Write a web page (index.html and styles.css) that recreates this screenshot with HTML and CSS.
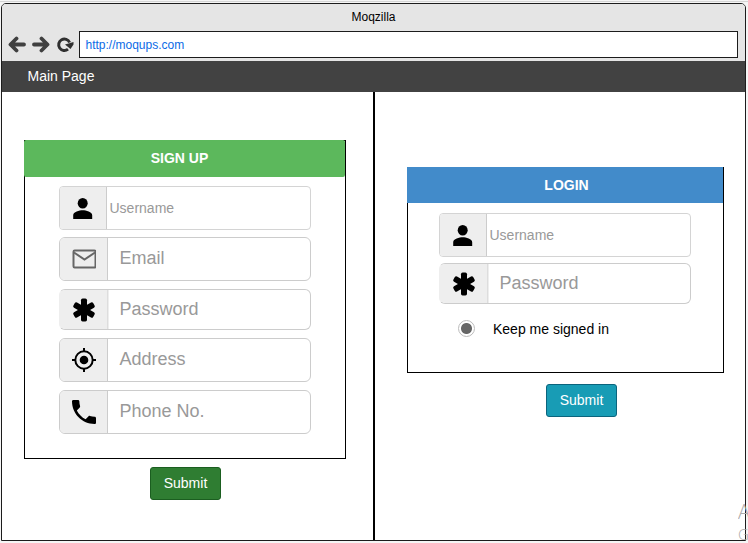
FILE: index.html
```html
<!DOCTYPE html>
<html lang="en">
<head>
<meta charset="utf-8">
<title>Moqzilla</title>
<link rel="stylesheet" href="styles.css">
</head>
<body>
<svg class="defs" width="0" height="0">
  <symbol id="user" viewBox="0 0 24 24"><ellipse cx="11.700" cy="7.300" rx="5" ry="5.300"/><path d="M11.700 14.300c-3.300 0-9.500 1.500-9.500 5v3.700h19v-3.700c0-3.500-6.200-5-9.500-5z"/></symbol>
  <symbol id="asterisk" viewBox="0 0 24 24"><rect x="9" y=".6" width="6" height="22.800" rx="1.600"/><rect x="9" y=".6" width="6" height="22.800" rx="1.600" transform="rotate(60 12 12)"/><rect x="9" y=".6" width="6" height="22.800" rx="1.600" transform="rotate(120 12 12)"/></symbol>
</svg>
<div class="window">
  <header class="chrome">
    <div class="title">Moqzilla</div>
    <div class="toolbar">
      <svg class="tool" viewBox="0 0 18 18"><path d="M16 8.500H3M8.500 2.500l-6 6 6 6"/></svg>
      <svg class="tool" viewBox="0 0 18 18"><path d="M2 8.500h13M9.500 2.500l6 6-6 6"/></svg>
      <svg class="tool reload" viewBox="0 0 18 18"><path d="M12 13.200A5.700 5.700 0 1 1 13.600 6.500"/><path class="tip" d="M9 8.500L17.500 6v2.500l-3 4.500z"/></svg>
      <div class="url">http://moqups.com</div>
    </div>
  </header>
  <nav class="nav">Main Page</nav>
  <main class="content">
    <section class="side signup">
      <div class="panel">
        <h2>SIGN UP</h2>
        <div class="fields">
          <div class="field small"><span class="addon"><svg viewBox="0 0 24 24"><use href="#user"/></svg></span><span class="hint">Username</span></div>
          <div class="field"><span class="addon"><svg class="mail" viewBox="0 0 24 24"><rect x="1.500" y="3.500" width="22" height="17" rx="1.200"/><path d="M2 5.500l10.500 7 10.500-7"/></svg></span><span class="hint">Email</span></div>
          <div class="field pass"><span class="addon"><svg viewBox="0 0 24 24"><use href="#asterisk"/></svg></span><span class="hint">Password</span></div>
          <div class="field"><span class="addon"><svg viewBox="0 0 24 24"><circle cx="12" cy="12" r="4.300"/><circle cx="12" cy="12" r="8.700" fill="none" stroke="#000" stroke-width="2"/><path d="M12 0v4M12 20v4M0 12h4M20 12h4" stroke="#000" stroke-width="2"/></svg></span><span class="hint">Address</span></div>
          <div class="field"><span class="addon"><svg viewBox="3 3 18 18"><path d="M6.620 10.790c1.440 2.830 3.760 5.140 6.590 6.590l2.200-2.200c.270-.270.670-.360 1.020-.240 1.120.370 2.330.570 3.570.570.550 0 1 .450 1 1V20c0 .550-.450 1-1 1-9.390 0-17-7.610-17-17 0-.550.450-1 1-1h3.500c.550 0 1 .450 1 1 0 1.250.200 2.450.570 3.570.110.350.030.740-.250 1.020l-2.200 2.200z"/></svg></span><span class="hint">Phone No.</span></div>
        </div>
      </div>
      <button class="submit green">Submit</button>
    </section>
    <section class="side login">
      <div class="panel">
        <h2>LOGIN</h2>
        <div class="fields">
          <div class="field small"><span class="addon"><svg viewBox="0 0 24 24"><use href="#user"/></svg></span><span class="hint">Username</span></div>
          <div class="field pass"><span class="addon"><svg viewBox="0 0 24 24"><use href="#asterisk"/></svg></span><span class="hint">Password</span></div>
          <div class="keep"><span class="radio"></span>Keep me signed in</div>
        </div>
      </div>
      <button class="submit teal">Submit</button>
    </section>
  </main>
</div>
<div class="watermark"><span class="big">A</span><span>G</span></div>
</body>
</html>
```
FILE: styles.css
```css
* { box-sizing: border-box; }
body {
  margin: 0;
  width: 748px;
  height: 543px;
  overflow: hidden;
  padding: 2px 2px 2px 1px;
  background: #f5f5f5;
  border-top: 1px solid #f5f5f5;
  box-shadow: inset 0 1px #d4d4d4;
  font-family: "Liberation Sans", Arial, sans-serif;
  font-size: 14px;
}
.defs { position: absolute; }
.window {
  width: 745px;
  height: 538px;
  border: 1px solid #1c1c1c;
  border-radius: 5px 5px 0 0;
  overflow: hidden;
  background: #fff;
  display: flex;
  flex-direction: column;
}
.chrome { height: 57px; background: #e5e5e5; }
.title { height: 27px; line-height: 27px; font-size: 12px; text-align: center; }
.toolbar { display: flex; align-items: center; padding: 0 7px 0 6px; }
.tool { width: 18px; height: 18px; margin-right: 6px; fill: none; stroke: #404040; stroke-width: 3.800; stroke-linecap: round; stroke-linejoin: round; }
.tool.reload { margin-right: 5px; stroke: #303030; stroke-width: 3; stroke-linecap: butt; }
.tool .tip { fill: #303030; stroke: none; }
.url { flex: 1; height: 27px; border: 1px solid #1c1c1c; background: #fff; padding-left: 5.5px; line-height: 27px; font-size: 12px; color: #0b6be6; }
.nav { height: 31px; background: #424242; color: #fff; padding-left: 25.5px; line-height: 30px; }
.content { flex: 1; display: flex; }
.side { display: flex; flex-direction: column; }
.signup { width: 373px; border-right: 2px solid #000; padding: 48px 0 0 22px; }
.login { flex: 1; padding: 75px 0 0 32px; }
.panel { border: 1px solid #000; flex: none; }
.signup .panel { width: 322px; height: 319px; }
.login .panel { width: 317px; height: 206px; }
h2 { margin: -1px 0 0 -1px; color: #fff; font-size: 14px; text-align: center; }
.signup h2 { height: 37px; line-height: 37px; background: #5cb85c; border-radius: 2px; padding-right: 10px; }
.login h2 { height: 36px; line-height: 36px; background: #428bca; padding-left: 3px; }
.fields { width: 252px; display: flex; flex-direction: column; }
.signup .fields { margin: 9px 0 0 34px; gap: 8px; }
.login .fields { margin: 10px 0 0 31px; gap: 6px; }
.field { height: 44px; display: flex; border: 1px solid #ccc; border-radius: 6px; overflow: hidden; background: #fff; color: #999; font-size: 18px; }
.field.small { font-size: 14px; border: 1px solid #d4d4d4; border-radius: 4px; }
.signup .field.small { margin-bottom: -1px; }
.field.pass { height: 41px; border-left-color: #eee; }
.addon { width: 48px; border-right: 1px solid #ccc; background: #eee; display: flex; align-items: center; justify-content: center; }
.small .addon { width: 47px; }
.pass .addon { border-right-color: #ddd; box-shadow: 0 0 0 1px #eee; }
.addon svg { width: 24px; height: 24px; }
.addon .mail { fill: none; stroke: #666; stroke-width: 2; }
.hint { display: flex; align-items: center; padding-left: 11.5px; padding-bottom: 1px; }
.small .hint { padding: 0 0 0 2.5px; }
.keep { display: flex; align-items: center; height: 18px; margin: 10px 0 0 19px; color: #000; }
.radio { width: 17px; height: 17px; margin: -1px 18px 0 0; border: 1px solid #bbb; border-radius: 50%; background: radial-gradient(circle, #666 5px, #fff 6px); }
.submit { width: 71px; height: 33px; padding: 0 0 2px; border: 1px solid; border-radius: 3px; color: #fff; font: 14px "Liberation Sans", Arial, sans-serif; }
.green { margin: 8px 0 0 126px; background: #2f7d32; border-color: #1b5e20; }
.teal { margin: 11px 0 0 139px; padding-bottom: 1px; background: #189cb5; border-color: #0b647d; }
.watermark { position: absolute; left: 738px; top: 500px; width: 10px; height: 43px; overflow: hidden; display: flex; flex-direction: column; font-family: "Open Sans", sans-serif; font-weight: 300; font-size: 15px; line-height: 20px; color: #aaa; }
.watermark .big { font-size: 20px; line-height: 24px; }
```
